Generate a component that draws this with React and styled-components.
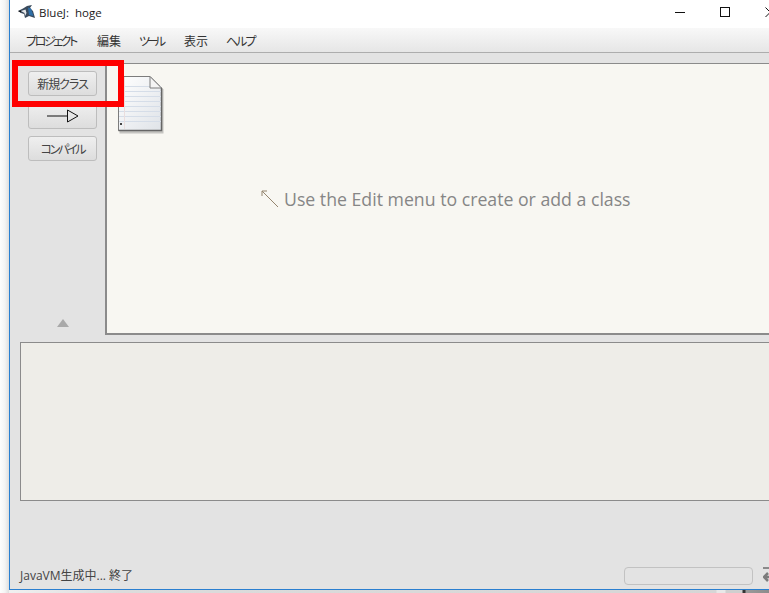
import React from "react";
import styled, { createGlobalStyle } from "styled-components";

const Global = createGlobalStyle`
  html, body { margin: 0; padding: 0; background: #fff; overflow: hidden; }
  body { font-family: "Open Sans", "Noto Sans CJK JP", sans-serif; }
`;

const Screen = styled.div`
  position: relative;
  width: 769px;
  height: 593px;
  overflow: hidden;
  display: flex;
  background: linear-gradient(90deg, #f2f2f2 0, #dcdcdc 120px, #d6d6d6 716px, #e8e8e8 717px, #e8e8e8 725px, #cfcfcf 726px, #cfcfcf 742px, #333 743px, #333 745px, #9a9a9a 746px, #8c8c8c 769px);
`;

const Gutter = styled.div`
  width: 9px;
  flex: none;
  height: 593px;
  background: linear-gradient(90deg, #fdfdfd 0%, #f4f4f4 55%, #dedede 100%);
`;

const Window = styled.div`
  flex: none;
  box-sizing: border-box;
  width: 790px;
  height: 590px;
  border-left: 1px solid #2a7fd0;
  border-bottom: 1px solid #2a7fd0;
  background: #e3e3e3;
  display: flex;
  flex-direction: column;
`;

const TitleBar = styled.div`
  height: 28px;
  flex: none;
  box-sizing: border-box;
  background: #fff;
  display: flex;
  align-items: center;
  padding: 0 0 4px 8px;
  color: #1a1a1a;
  font-size: 12px;
`;

const TitleText = styled.span`
  margin-left: 3px;
  font-family: "Open Sans", sans-serif;
  white-space: pre;
  font-size: 11.5px;
`;

const Controls = styled.div`
  margin-left: auto;
  margin-right: 23px;
  display: flex;
  align-items: center;
  gap: 34px;
`;

const MenuBar = styled.div`
  height: 25px;
  flex: none;
  box-sizing: border-box;
  background: linear-gradient(#f8f8f8, #e6e6e6);
  border-bottom: 1px solid #adadad;
  display: flex;
  align-items: center;
  padding-left: 16px;
`;

const MenuItem = styled.span`
  flex: none;
  width: ${(p) => p.$w}px;
  font-family: "Noto Sans CJK JP", sans-serif;
  font-feature-settings: "palt";
  font-size: 12px;
  color: #333;
  white-space: nowrap;
  letter-spacing: ${(p) => p.$track || 0}px;
`;

const Strip = styled.div`
  height: 10px;
  flex: none;
`;

const Main = styled.div`
  height: 272px;
  flex: none;
  display: flex;
`;

const Sidebar = styled.div`
  width: 95px;
  flex: none;
  box-sizing: border-box;
  padding: 8px 8px 0 18px;
  display: flex;
  flex-direction: column;
  align-items: stretch;
  gap: 7px;
`;

const ToolButton = styled.button`
  height: ${(p) => (p.$tall ? "26px" : "25px")};
  flex: none;
  box-sizing: border-box;
  padding: 0;
  border: 1px solid #bdbdbd;
  border-radius: 3px;
  background: linear-gradient(#efefef, #dddddd);
  font-family: "Noto Sans CJK JP", sans-serif;
  font-feature-settings: "palt";
  font-size: 12px;
  color: #444;
  letter-spacing: ${(p) => p.$track || 0}px;
  display: flex;
  align-items: center;
  justify-content: center;
`;

const Triangle = styled.div`
  margin: auto 0 8px 29px;
  width: 0;
  height: 0;
  border-left: 6px solid transparent;
  border-right: 6px solid transparent;
  border-bottom: 8px solid #a9a9a9;
`;

const Editor = styled.div`
  flex: 1;
  position: relative;
  box-sizing: border-box;
  background: #f8f7f2;
  border-left: 2px solid #8b8b8b;
  border-top: 1px solid #8b8b8b;
  border-bottom: 2px solid #8b8b8b;
`;

const Doc = styled.svg`
  position: absolute;
  left: 8px;
  top: 10px;
`;

const Hint = styled.div`
  position: absolute;
  left: 154px;
  top: 123px;
  display: flex;
  align-items: center;
  gap: 5px;
  font-family: "Open Sans", sans-serif;
  font-size: 17.7px;
  line-height: 24px;
  color: #868686;
  white-space: nowrap;
`;

const Terminal = styled.div`
  flex: none;
  box-sizing: border-box;
  height: 159px;
  margin: 7px 0 0 10px;
  background: #eeede8;
  border: 1px solid #8b8b8b;
`;

const Status = styled.div`
  flex: 1;
  display: flex;
  align-items: flex-end;
  padding: 0 22px 4px 10px;
`;

const StatusText = styled.span`
  font-family: "Open Sans", "Noto Sans CJK JP", sans-serif;
  font-size: 12px;
  line-height: 18px;
  color: #444;
`;

const Progress = styled.div`
  width: 129px;
  height: 18px;
  box-sizing: border-box;
  margin-left: auto;
  border: 1px solid #c2c2c2;
  border-radius: 4px;
`;

const StatusIcon = styled.svg`
  margin-left: 10px;
`;

const Highlight = styled.div`
  position: absolute;
  left: 12px;
  top: 60px;
  width: 112px;
  height: 47px;
  box-sizing: border-box;
  border: 6px solid #ff0000;
`;

const Bird = () => (
  <svg width="18" height="14" viewBox="0 0 18 14">
    <path d="M0 6 L5 3.5 L9 1 L14 0 L12 3 L15 6 L17 13 L11 11 L7 13 L6 9 L3 8 Z" fill="#3a4a5c" />
    <path d="M10 2.5 L13 3.5 L15.5 11 L11 10 Z" fill="#2f6fa8" />
    <path d="M3 6 L7.5 4.5 L8.5 8 L7 11 L6.5 8 Z" fill="#e6e8ea" />
    <path d="M0 6 L3 5.5 L3 7.5 Z" fill="#111" />
  </svg>
);

const Page = () => {
  const rows = [];
  for (let y = 12; y < 52; y += 5) rows.push(y);
  return (
    <Doc width="52" height="62" viewBox="0 0 52 62">
      <defs>
        <linearGradient id="pg" x1="0" y1="0" x2="1" y2="1">
          <stop offset="0" stopColor="#ffffff" />
          <stop offset="1" stopColor="#dfe3e8" />
        </linearGradient>
      </defs>
      <path d="M3 2 H35 L47 14 V58 H3 Z" fill="#777" opacity="0.4" transform="translate(1.5 1.5)" />
      <path d="M3.5 2.5 H35 L46.5 14 V56.5 H3.5 Z" fill="url(#pg)" stroke="#7c7c7c" strokeWidth="1" />
      <path d="M46.5 14 V56.5 H3.5" fill="none" stroke="#666" strokeWidth="1.5" />
      {rows.map((y) => (
        <path key={y} d={`M4 ${y + 0.5} H46`} stroke="#d5dde8" strokeWidth="1" />
      ))}
      <path d="M9.5 3 V55" stroke="#eadede" strokeWidth="1" />
      <path d="M35 2.5 V14 H46.5 Z" fill="#f4f4f4" stroke="#7c7c7c" strokeWidth="1" />
      <rect x="5" y="49" width="2" height="2" fill="#444" />
    </Doc>
  );
};

export default function App() {
  return (
    <Screen>
      <Global />
      <Gutter />
      <Window>
        <TitleBar>
          <Bird />
          <TitleText>BlueJ:  hoge</TitleText>
          <Controls>
            <svg width="11" height="11" viewBox="0 0 11 11"><path d="M0 5.5 H10" stroke="#111" strokeWidth="1" /></svg>
            <svg width="11" height="11" viewBox="0 0 11 11"><rect x="0.5" y="0.5" width="9" height="9" fill="none" stroke="#111" /></svg>
            <svg width="11" height="11" viewBox="0 0 11 11"><path d="M0.5 0.5 L10 10 M10 0.5 L0.5 10" stroke="#111" /></svg>
          </Controls>
        </TitleBar>
        <MenuBar>
          <MenuItem $w={71} $track={-2.4}>プロジェクト</MenuItem>
          <MenuItem $w={42}>編集</MenuItem>
          <MenuItem $w={45} $track={-3.5}>ツール</MenuItem>
          <MenuItem $w={42}>表示</MenuItem>
          <MenuItem $w={40} $track={-2}>ヘルプ</MenuItem>
        </MenuBar>
        <Strip />
        <Main>
          <Sidebar>
            <ToolButton $track={-1}>新規クラス</ToolButton>
            <ToolButton $tall>
              <svg width="32" height="14" viewBox="0 0 32 14">
                <path d="M0 7 H20" stroke="#111" />
                <path d="M20.5 1 L31 7 L20.5 13 Z" fill="none" stroke="#111" />
              </svg>
            </ToolButton>
            <ToolButton $track={-2.3}>コンパイル</ToolButton>
            <Triangle />
          </Sidebar>
          <Editor>
            <Page />
            <Hint>
              <svg width="18" height="18" viewBox="0 0 18 18">
                <path d="M1 1 L17 17 M1 1 H6 M1 1 V6" stroke="#94856f" strokeWidth="1" fill="none" />
              </svg>
              Use the Edit menu to create or add a class
            </Hint>
          </Editor>
        </Main>
        <Terminal />
        <Status>
          <StatusText>JavaVM生成中... 終了</StatusText>
          <Progress />
          <StatusIcon width="14" height="18" viewBox="0 0 14 18">
            <path d="M0 1 H14" stroke="#8a8a8a" strokeWidth="2" />
            <path d="M5 6 L1 10 L5 14 M1 10 H14" stroke="#7c7c7c" strokeWidth="2.5" fill="none" />
          </StatusIcon>
        </Status>
      </Window>
      <Highlight />
    </Screen>
  );
}
